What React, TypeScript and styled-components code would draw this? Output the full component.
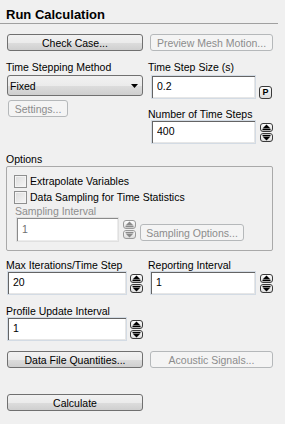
import React from "react";
import styled, { createGlobalStyle, css } from "styled-components";

const GlobalStyle = createGlobalStyle`
  html, body { margin: 0; padding: 0; background: #f0f0f0; }
  body {
    font-family: "Liberation Sans", Arial, sans-serif;
    font-size: 10.5px;
    color: #000;
  }
  * { box-sizing: border-box; }
`;

const Panel = styled.div`
  width: 285px;
  height: 424px;
  background: #f0f0f0;
  overflow: hidden;
`;

const Title = styled.div`
  padding: 7px 0 0 6px;
  font-weight: bold;
  font-size: 13px;
  line-height: 16px;
  height: 23px;
`;

const Separator = styled.div`
  width: 278px;
  height: 1px;
  background: #a0a0a0;
`;

const Content = styled.div`
  display: flex;
  flex-direction: column;
  padding: 0 12px 0 6px;
`;

const ButtonRow = styled.div<{ $mt: number }>`
  display: flex;
  gap: 7px;
  padding-left: 1px;
  margin-top: ${(p) => p.$mt}px;
`;

const Button = styled.button<{ $w: number; $ml?: number; $mt?: number }>`
  width: ${(p) => p.$w}px;
  height: 17px;
  margin: ${(p) => p.$mt ?? 0}px 0 0 ${(p) => p.$ml ?? 0}px;
  padding: 0;
  border: 1px solid #707070;
  border-radius: 3px;
  background: linear-gradient(#f2f2f2 0%, #ebebeb 50%, #dddddd 51%, #cfcfcf 100%);
  font-family: inherit;
  font-size: 10.5px;
  line-height: 14px;
  color: #000;
  white-space: nowrap;
  flex: none;
  &:disabled {
    border-color: #b5b8ba;
    background: #f4f4f4;
    color: #8c8c8c;
  }
`;

const TwoCol = styled.div<{ $mt: number }>`
  display: grid;
  grid-template-columns: 142px 1fr;
  margin-top: ${(p) => p.$mt}px;
`;

const Col = styled.div`
  display: flex;
  flex-direction: column;
  align-items: flex-start;
`;

const Label = styled.div<{ $mt?: number; $ml?: number; $disabled?: boolean }>`
  height: 12px;
  line-height: 12px;
  white-space: nowrap;
  margin-top: ${(p) => p.$mt ?? 0}px;
  margin-left: ${(p) => p.$ml ?? 0}px;
  color: ${(p) => (p.$disabled ? "#8d8d8d" : "#000")};
`;

const Dropdown = styled.div`
  margin: 2px 0 0 1px;
  width: 136px;
  height: 21px;
  display: flex;
  align-items: center;
  justify-content: space-between;
  padding: 0 4px 0 2px;
  border: 1px solid #707070;
  border-radius: 3px;
  background: linear-gradient(#f2f2f2 0%, #ebebeb 50%, #dddddd 51%, #cfcfcf 100%);
`;

const FieldRow = styled.div<{ $mt?: number; $gap: number; $ml?: number; $align?: string }>`
  display: flex;
  align-items: ${(p) => p.$align ?? "center"};
  gap: ${(p) => p.$gap}px;
  margin-top: ${(p) => p.$mt ?? 0}px;
  margin-left: ${(p) => p.$ml ?? 0}px;
`;

const TextField = styled.input<{ $w: number; $h?: number }>`
  width: ${(p) => p.$w}px;
  height: ${(p) => p.$h ?? 24}px;
  margin: 0;
  padding: 0 0 2px 5px;
  font-family: inherit;
  font-size: 10.5px;
  color: #000;
  background: #fff;
  border: 1px solid #d3dbe4;
  box-shadow: inset 1px 1px 0 #646464, inset -1px -1px 0 #e6e6e6;
  outline: none;
  flex: none;
  &:disabled {
    color: #6f6f6f;
    border-color: #e0e0e0;
    box-shadow: inset 1px 1px 0 #8a8a8a, inset -1px -1px 0 #ececec;
    background: #fff;
  }
`;

const SmallBtn = styled.div<{ $disabled?: boolean; $h: number }>`
  width: 13px;
  height: ${(p) => p.$h}px;
  border: 1px solid ${(p) => (p.$disabled ? "#9a9a9a" : "#3a3a3a")};
  border-radius: 3px;
  background: linear-gradient(#fdfdfd, #dcdcdc);
  display: flex;
  align-items: center;
  justify-content: center;
  font-size: 9px;
  font-weight: bold;
  line-height: 1;
  color: ${(p) => (p.$disabled ? "#8a8a8a" : "#000")};
`;

const SpinStack = styled.div`
  display: flex;
  flex-direction: column;
  gap: 1px;
  flex: none;
`;

const GroupBox = styled.div`
  margin-top: 1px;
  height: 85px;
  border: 1px solid #a9a9a9;
  border-radius: 2px;
  padding: 6px 0 0 7px;
  display: flex;
  flex-direction: column;
`;

const CheckRow = styled.label`
  display: flex;
  align-items: center;
  gap: 3px;
  height: 16px;
  white-space: nowrap;
`;

const CheckBox = styled.span`
  width: 13px;
  height: 13px;
  border: 1px solid #8e8f8f;
  background: linear-gradient(135deg, #dcdcdc, #f6f6f6);
  box-shadow: inset 0 0 0 1px #f4f4f4;
  flex: none;
`;

const Arrow = ({ dir, color = "#000" }: { dir: "up" | "down"; color?: string }) => (
  <svg width="9" height="7" viewBox="0 0 9 7">
    {dir === "up" ? (
      <>
        <polygon points="4.5,0.5 8.5,4.5 0.5,4.5" fill={color} />
        <rect x="0.5" y="5" width="8" height="1.2" fill={color} />
      </>
    ) : (
      <>
        <rect x="0.5" y="0.8" width="8" height="1.2" fill={color} />
        <polygon points="0.5,2.5 8.5,2.5 4.5,6.5" fill={color} />
      </>
    )}
  </svg>
);

const Spinner = ({ disabled }: { disabled?: boolean }) => {
  const c = disabled ? "#8a8a8a" : "#000";
  return (
    <SpinStack>
      <SmallBtn $h={9} $disabled={disabled}>
        <Arrow dir="up" color={c} />
      </SmallBtn>
      <SmallBtn $h={9} $disabled={disabled}>
        <Arrow dir="down" color={c} />
      </SmallBtn>
    </SpinStack>
  );
};

const DropArrow = () => (
  <svg width="7" height="4" viewBox="0 0 7 4">
    <polygon points="0,0 7,0 3.5,4" fill="#000" />
  </svg>
);

export default function App() {
  return (
    <Panel>
      <GlobalStyle />
      <Title>Run Calculation</Title>
      <Separator />
      <Content>
        <ButtonRow $mt={10}>
          <Button $w={136}>Check Case...</Button>
          <Button $w={123} disabled>
            Preview Mesh Motion...
          </Button>
        </ButtonRow>

        <TwoCol $mt={10}>
          <Col>
            <Label>Time Stepping Method</Label>
            <Dropdown>
              <span>Fixed</span>
              <DropArrow />
            </Dropdown>
            <Button $w={60} $ml={2} $mt={4} disabled>
              Settings...
            </Button>
          </Col>
          <Col>
            <Label>Time Step Size (s)</Label>
            <FieldRow $mt={2} $gap={3} $ml={3} $align="flex-end">
              <TextField $w={105} defaultValue="0.2" readOnly />
              <SmallBtn $h={13}>P</SmallBtn>
            </FieldRow>
            <Label $mt={9}>Number of Time Steps</Label>
            <FieldRow $gap={4} $ml={3}>
              <TextField $w={105} defaultValue="400" readOnly />
              <Spinner />
            </FieldRow>
          </Col>
        </TwoCol>

        <Label $mt={9}>Options</Label>
        <GroupBox>
          <CheckRow>
            <CheckBox />
            Extrapolate Variables
          </CheckRow>
          <CheckRow>
            <CheckBox />
            Data Sampling for Time Statistics
          </CheckRow>
          <Label $ml={1} $disabled>
            Sampling Interval
          </Label>
          <FieldRow $gap={4} $ml={2}>
            <TextField $w={103} $h={25} defaultValue="1" disabled />
            <Spinner disabled />
            <Button $w={104} $mt={6} disabled>
              Sampling Options...
            </Button>
          </FieldRow>
        </GroupBox>

        <TwoCol $mt={8}>
          <Col>
            <Label>Max Iterations/Time Step</Label>
            <FieldRow $gap={3} $ml={1}>
              <TextField $w={120} defaultValue="20" readOnly />
              <Spinner />
            </FieldRow>
          </Col>
          <Col>
            <Label>Reporting Interval</Label>
            <FieldRow $gap={4} $ml={2}>
              <TextField $w={106} defaultValue="1" readOnly />
              <Spinner />
            </FieldRow>
          </Col>
        </TwoCol>

        <Label $mt={10}>Profile Update Interval</Label>
        <FieldRow $gap={3} $ml={1}>
          <TextField $w={120} defaultValue="1" readOnly />
          <Spinner />
        </FieldRow>

        <ButtonRow $mt={10}>
          <Button $w={136}>Data File Quantities...</Button>
          <Button $w={123} disabled>
            Acoustic Signals...
          </Button>
        </ButtonRow>

        <ButtonRow $mt={26}>
          <Button $w={136}>Calculate</Button>
        </ButtonRow>
      </Content>
    </Panel>
  );
}
